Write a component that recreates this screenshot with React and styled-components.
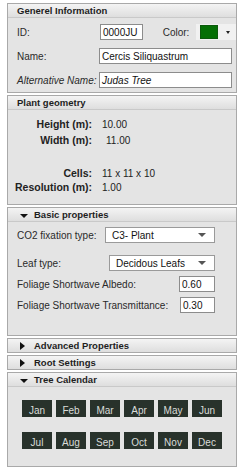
import React from "react";
import styled, { createGlobalStyle } from "styled-components";

const Global = createGlobalStyle`
  html, body { margin: 0; padding: 0; background: #ffffff; }
  body { font-family: "Liberation Sans", Arial, sans-serif; font-size: 10px; color: #222; }
`;

const Page = styled.div`
  width: 230px;
  padding: 3px 7px 0 7px;
  display: flex;
  flex-direction: column;
  gap: 2px;
`;

const Panel = styled.div`
  border: 1px solid #a9a9a9;
  background: #e4e4e4;
  display: flex;
  flex-direction: column;
`;

const Header = styled.div`
  height: 13px;
  display: flex;
  align-items: center;
  gap: 6px;
  padding-left: ${(p) => (p.$arrow ? "12px" : "9px")};
  background: linear-gradient(#f4f4f4, #dedede);
  border-bottom: ${(p) => (p.$closed ? "none" : "1px solid #c9c9c9")};
  font-weight: bold;
  font-size: 9.5px;
  color: #1e1e1e;
`;

const Arrow = styled.span`
  width: 0;
  height: 0;
  ${(p) =>
    p.$open
      ? `border-left: 4px solid transparent; border-right: 4px solid transparent; border-top: 4px solid #111; margin-top: 2px;`
      : `border-top: 4px solid transparent; border-bottom: 4px solid transparent; border-left: 5px solid #111; margin-right: 3px;`}
`;

const Body = styled.div`
  padding: ${(p) => p.$pad || "0"};
  display: flex;
  flex-direction: column;
  gap: ${(p) => p.$gap || "0"};
`;

const Row = styled.div`
  display: flex;
  align-items: center;
  height: 16px;
  margin-top: ${(p) => p.$mt || "0"};
`;

const Label = styled.span`
  width: ${(p) => p.$w || "auto"};
  flex-shrink: 0;
  font-style: ${(p) => (p.$italic ? "italic" : "normal")};
  color: #2a2a2a;
`;

const TextBox = styled.div`
  box-sizing: border-box;
  height: 16px;
  width: ${(p) => p.$w};
  background: #fff;
  border: 1px solid #8c8c8c;
  padding: 0 2px;
  display: flex;
  align-items: center;
  font-style: ${(p) => (p.$italic ? "italic" : "normal")};
  margin-left: ${(p) => p.$ml || "0"};
  color: #111;
`;

const ColorLabel = styled.span`
  margin-left: 20px;
  color: #2a2a2a;
`;

const ColorPicker = styled.div`
  margin-left: 7px;
  width: 40px;
  height: 16px;
  background: #f1f1f1;
  display: flex;
  align-items: center;
  padding-left: 4px;
  box-sizing: border-box;
  gap: 8px;
`;

const Swatch = styled.div`
  width: 18px;
  height: 14px;
  background: #046f04;
  border: 1px solid #0b5a0b;
  box-sizing: border-box;
`;

const SmallDown = styled.span`
  width: 0;
  height: 0;
  border-left: 2.5px solid transparent;
  border-right: 2.5px solid transparent;
  border-top: 3px solid #222;
`;

const GeoRow = styled.div`
  display: flex;
  align-items: center;
  height: 14px;
  margin-top: ${(p) => p.$mt || "0"};
`;

const GeoLabel = styled.span`
  width: 84px;
  text-align: right;
  font-weight: bold;
  font-size: 10.5px;
  color: #222;
  flex-shrink: 0;
`;

const GeoValue = styled.span`
  margin-left: ${(p) => p.$ml || "10px"};
  color: #222;
`;

const Select = styled.div`
  box-sizing: border-box;
  height: 16px;
  width: ${(p) => p.$w};
  margin-left: ${(p) => p.$ml || "0"};
  background: #fff;
  border: 1px solid #9a9a9a;
  display: flex;
  align-items: center;
  justify-content: space-between;
  padding: 0 8px 0 6px;
  color: #111;
`;

const SelectArrow = styled.span`
  width: 0;
  height: 0;
  border-left: 4px solid transparent;
  border-right: 4px solid transparent;
  border-top: 4px solid #555;
`;

const Months = styled.div`
  display: grid;
  grid-template-columns: repeat(6, 30px);
  grid-auto-rows: 17px;
  column-gap: 4px;
  row-gap: 15px;
  padding: 13px 0 17px 14px;
`;

const Month = styled.div`
  background: #28322b;
  color: #d9dcd9;
  font-size: 10px;
  display: flex;
  align-items: flex-end;
  justify-content: center;
  line-height: 11px;
  padding-bottom: 1px;
  box-sizing: border-box;
`;

const months = ["Jan", "Feb", "Mar", "Apr", "May", "Jun", "Jul", "Aug", "Sep", "Oct", "Nov", "Dec"];

export default function App() {
  return (
    <Page>
      <Global />
      <Panel>
        <Header>Generel Information</Header>
        <Body $pad="6px 0 4px 9px" $gap="8px">
          <Row>
            <Label $w="83px">ID:</Label>
            <TextBox $w="43px">0000JU</TextBox>
            <ColorLabel>Color:</ColorLabel>
            <ColorPicker>
              <Swatch />
              <SmallDown />
            </ColorPicker>
          </Row>
          <Row>
            <Label $w="82px">Name:</Label>
            <TextBox $w="133px">Cercis Siliquastrum</TextBox>
          </Row>
          <Row>
            <Label $w="82px" $italic>Alternative Name:</Label>
            <TextBox $w="133px" $italic>Judas Tree</TextBox>
          </Row>
        </Body>
      </Panel>

      <Panel>
        <Header>Plant geometry</Header>
        <Body $pad="7px 0 10px 0">
          <GeoRow>
            <GeoLabel>Height (m):</GeoLabel>
            <GeoValue>10.00</GeoValue>
          </GeoRow>
          <GeoRow $mt="2px">
            <GeoLabel>Width (m):</GeoLabel>
            <GeoValue $ml="14px">11.00</GeoValue>
          </GeoRow>
          <GeoRow $mt="19px">
            <GeoLabel>Cells:</GeoLabel>
            <GeoValue>11 x 11 x 10</GeoValue>
          </GeoRow>
          <GeoRow>
            <GeoLabel>Resolution (m):</GeoLabel>
            <GeoValue>1.00</GeoValue>
          </GeoRow>
        </Body>
      </Panel>

      <Panel>
        <Header $arrow>
          <Arrow $open />
          Basic properties
        </Header>
        <Body $pad="5px 0 22px 9px">
          <Row>
            <Label $w="88px">CO2 fixation type:</Label>
            <Select $w="110px">
              C3- Plant
              <SelectArrow />
            </Select>
          </Row>
          <Row $mt="12px">
            <Label $w="92px">Leaf type:</Label>
            <Select $w="106px">
              Decidous Leafs
              <SelectArrow />
            </Select>
          </Row>
          <Row $mt="5px">
            <Label $w="162px">Foliage Shortwave Albedo:</Label>
            <TextBox $w="36px">0.60</TextBox>
          </Row>
          <Row $mt="5px">
            <Label $w="163px">Foliage Shortwave Transmittance:</Label>
            <TextBox $w="35px">0.30</TextBox>
          </Row>
        </Body>
      </Panel>

      <Panel>
        <Header $arrow $closed>
          <Arrow />
          Advanced Properties
        </Header>
      </Panel>

      <Panel>
        <Header $arrow $closed>
          <Arrow />
          Root Settings
        </Header>
      </Panel>

      <Panel>
        <Header $arrow>
          <Arrow $open />
          Tree Calendar
        </Header>
        <Months>
          {months.map((m) => (
            <Month key={m}>{m}</Month>
          ))}
        </Months>
      </Panel>
    </Page>
  );
}
